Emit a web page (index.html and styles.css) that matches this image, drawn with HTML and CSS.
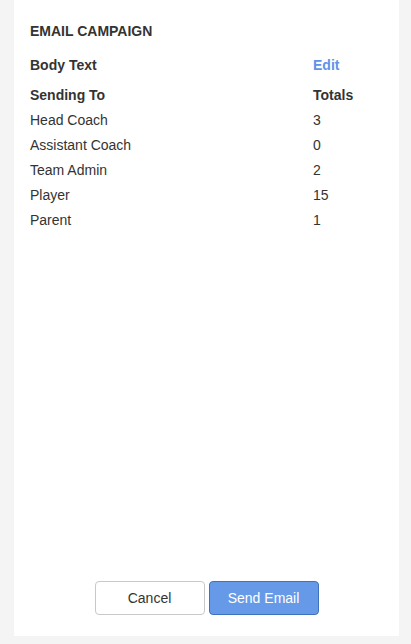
FILE: index.html
```html
<!DOCTYPE html>
<html>
<head>
<meta charset="utf-8">
<link rel="stylesheet" href="styles.css">
</head>
<body>
<div class="card">
  <h1 class="title">EMAIL CAMPAIGN</h1>
  <div class="row row-head first">
    <span class="label">Body Text</span>
    <a class="value edit" href="#">Edit</a>
  </div>
  <div class="row row-head second">
    <span class="label">Sending To</span>
    <span class="value">Totals</span>
  </div>
  <div class="row"><span class="label">Head Coach</span><span class="value">3</span></div>
  <div class="row"><span class="label">Assistant Coach</span><span class="value">0</span></div>
  <div class="row"><span class="label">Team Admin</span><span class="value">2</span></div>
  <div class="row"><span class="label">Player</span><span class="value">15</span></div>
  <div class="row"><span class="label">Parent</span><span class="value">1</span></div>
  <div class="actions">
    <button class="btn btn-cancel">Cancel</button>
    <button class="btn btn-send">Send Email</button>
  </div>
</div>
</body>
</html>
```
FILE: styles.css
```css
html, body {
  margin: 0;
  padding: 0;
  height: 100%;
}
body {
  background: #f4f4f4;
  font-family: "Liberation Sans", Arial, sans-serif;
  font-size: 14px;
  color: #333;
}
.card {
  box-sizing: border-box;
  margin: 0 12px 0 14px;
  height: 636px;
  background: #fff;
  padding: 21px 16px 21px 16px;
  display: flex;
  flex-direction: column;
}
.title {
  margin: 0;
  font-size: 14px;
  line-height: 20px;
  font-weight: bold;
}
.row {
  display: flex;
  line-height: 25px;
  height: 25px;
}
.row-head {
  font-weight: bold;
}
.row.first {
  margin-top: 12px;
}
.row.second {
  margin-top: 5px;
}
.label {
  width: 283px;
  flex: none;
}
.value {
  flex: 1;
}
.edit {
  color: #5f93e8;
  text-decoration: none;
}
.actions {
  margin-top: auto;
  display: flex;
  justify-content: center;
  gap: 4px;
}
.btn {
  box-sizing: border-box;
  width: 110px;
  height: 34px;
  border-radius: 4px;
  font-family: "Liberation Sans", Arial, sans-serif;
  font-size: 14px;
  padding: 0;
  cursor: pointer;
}
.btn-cancel {
  background: #fff;
  border: 1px solid #c8c8c8;
  color: #333;
}
.btn-send {
  background: #6699e8;
  border: 1px solid #3f72bd;
  color: #fff;
}
```
